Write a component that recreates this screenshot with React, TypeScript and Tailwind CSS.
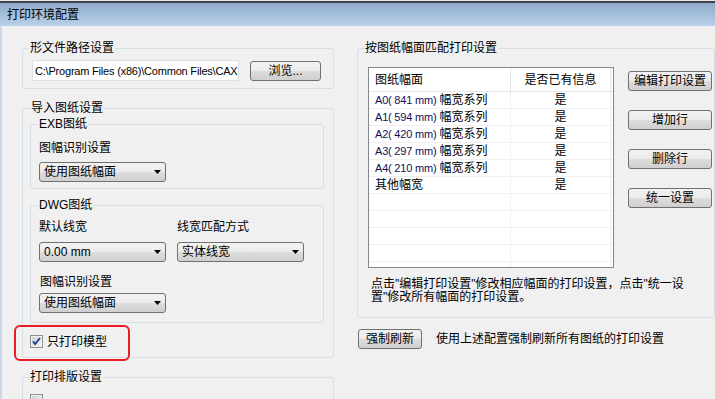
import React from "react";

const btn =
  "flex items-center justify-center h-[20px] border border-[#707070] rounded-[3px] bg-[linear-gradient(#f2f2f2_0%,#ebebeb_50%,#dddddd_50%,#cfcfcf_100%)] text-[12px] leading-[14px]";

function Combo({ label, className = "" }: { label: string; className?: string }) {
  return (
    <div
      className={`flex items-center justify-between h-[20px] w-[127px] pl-[4px] pr-[4px] border border-[#707070] rounded-[3px] bg-[linear-gradient(#f2f2f2_0%,#ebebeb_50%,#dddddd_50%,#cfcfcf_100%)] ${className}`}
    >
      <span className="leading-[14px]">{label}</span>
      <svg width="7" height="4" viewBox="0 0 7 4">
        <polygon points="0,0 7,0 3.5,4" fill="#000" />
      </svg>
    </div>
  );
}

function CheckBox({ checked }: { checked?: boolean }) {
  return (
    <svg width="13" height="13" viewBox="0 0 13 13" className="shrink-0">
      <defs>
        <linearGradient id="cbg" x1="0" y1="0" x2="1" y2="1">
          <stop offset="0" stopColor="#cbcfd5" />
          <stop offset="1" stopColor="#f6f6f6" />
        </linearGradient>
      </defs>
      <rect x="0.5" y="0.5" width="12" height="12" fill="#f4f4f4" stroke="#8e8f8f" />
      <rect x="2" y="2" width="9" height="9" fill="url(#cbg)" stroke="#e0e3e8" strokeWidth="0.5" />
      {checked && (
        <path d="M3 6.3 L5.2 9 L10 3" fill="none" stroke="#21409a" strokeWidth="1.9" />
      )}
    </svg>
  );
}

function Group({
  title,
  legendClass = "ml-[6px]",
  className = "",
  children,
}: {
  title: string;
  legendClass?: string;
  className?: string;
  children: React.ReactNode;
}) {
  return (
    <fieldset className={`border border-[#d5dfe5] rounded-[3px] ${className}`}>
      <legend className={`px-[1px] text-[12px] leading-[14px] ${legendClass}`}>{title}</legend>
      {children}
    </fieldset>
  );
}

const rows = [
  ["A0( 841 mm)", "幅宽系列", "是"],
  ["A1( 594 mm)", "幅宽系列", "是"],
  ["A2( 420 mm)", "幅宽系列", "是"],
  ["A3( 297 mm)", "幅宽系列", "是"],
  ["A4( 210 mm)", "幅宽系列", "是"],
  ["", "其他幅宽", "是"],
  ["", "", ""],
  ["", "", ""],
  ["", "", ""],
  ["", "", ""],
  ["", "", ""],
];

export default function App() {
  return (
    <div className="w-[715px] h-[399px] overflow-hidden bg-[#f0f0f0] text-[12px] text-black font-['Liberation_Sans','Noto_Sans_CJK_SC',sans-serif]">
      {/* title bar */}
      <div className="h-[1px] bg-[#e6e6e6]" />
      <div className="h-[2px] bg-[#414549]" />
      <div className="h-[23px] flex items-center pl-[7px] bg-[linear-gradient(#8fabc9,#b9d1ea)] leading-[14px]">
        打印环境配置
      </div>

      <div className="flex h-[373px] border-l-2 border-[#c9d7e6] pl-[20px]">
        {/* left column */}
        <div className="w-[312px] shrink-0">
          <Group title="形文件路径设置" className="mt-[15px]">
            <div className="flex items-center gap-[11px] pl-[9px] pt-[5px] pb-[7px]">
              <div className="h-[21px] w-[207px] flex items-center pl-[2px] bg-white border border-[#d9dfe5] whitespace-nowrap overflow-hidden leading-[14px] text-[11px] tracking-[-0.2px]">
                C:\Program Files (x86)\Common Files\CAX
              </div>
              <div className={`${btn} w-[71px]`}>浏览...</div>
            </div>
          </Group>

          <Group title="导入图纸设置" legendClass="ml-[7px]" className="mt-[12px]">
            <div className="pl-[7px] pr-[9px] pt-[2px] pb-[9px]">
              <Group title="EXB图纸" legendClass="ml-[7px]">
                <div className="pl-[8px] pt-[10px] pb-[6px]">
                  <div className="leading-[14px]">图幅识别设置</div>
                  <Combo label="使用图纸幅面" className="mt-[7px]" />
                </div>
              </Group>

              <Group title="DWG图纸" legendClass="ml-[7px]" className="mt-[9px]">
                <div className="pl-[8px] pt-[8px] pb-[9px]">
                  <div className="flex leading-[14px]">
                    <div className="w-[138px]">默认线宽</div>
                    <div>线宽匹配方式</div>
                  </div>
                  <div className="flex gap-[11px] mt-[8px]">
                    <Combo label="0.00 mm" />
                    <Combo label="实体线宽" />
                  </div>
                  <div className="mt-[13px] pl-[1px] leading-[14px]">图幅识别设置</div>
                  <Combo label="使用图纸幅面" className="mt-[4px]" />
                </div>
              </Group>

              <div className="relative mt-[12px] flex items-center h-[13px]">
                <CheckBox checked />
                <span className="ml-[4px] leading-[14px]">只打印模型</span>
                <div className="absolute left-[-16px] top-[-10px] w-[116px] h-[36px] border-2 border-[#ec1c24] rounded-[6px]" />
              </div>
            </div>
          </Group>

          <Group title="打印排版设置" legendClass="ml-[6px]" className="mt-[12px] h-[60px]">
            <div className="pl-[7px] pt-[10px]">
              <CheckBox />
            </div>
          </Group>
        </div>

        {/* right column */}
        <div className="ml-[23px] w-[358px] shrink-0">
          <Group title="按图纸幅面匹配打印设置" className="mt-[15px]">
            <div className="flex pl-[10px] pt-[12px]">
              <div className="w-[246px] h-[201px] border border-[#828790] bg-white overflow-hidden">
                <div className="flex h-[24px] border-b border-[#e5e5e5] leading-[14px]">
                  <div className="w-[142px] border-r border-[#e5e5e5] flex items-center pl-[6px]">图纸幅面</div>
                  <div className="w-[100px] border-r border-[#e5e5e5] flex items-center justify-center">是否已有信息</div>
                </div>
                {rows.map((r, i) => (
                  <div key={i} className="flex h-[17px] border-b border-[#f0f0f0] leading-[14px]">
                    <div className="w-[142px] border-r border-[#f0f0f0] flex items-center pl-[6px] whitespace-nowrap">
                      {r[0] && <span className="text-[11px] tracking-[-0.2px] text-[#10105a] mr-[3px]">{r[0]}</span>}
                      {r[1]}
                    </div>
                    <div className="w-[100px] border-r border-[#f0f0f0] flex items-center justify-center">{r[2]}</div>
                  </div>
                ))}
              </div>
              <div className="ml-[14px] pt-[4px] flex flex-col gap-[19px] w-[84px]">
                <div className={btn}>编辑打印设置</div>
                <div className={btn}>增加行</div>
                <div className={btn}>删除行</div>
                <div className={btn}>统一设置</div>
              </div>
            </div>
            <div className="pl-[13px] mt-[10px] pb-[13px] leading-[13px] whitespace-nowrap">
              点击"编辑打印设置"修改相应幅面的打印设置，点击"统一设
              <br />
              置"修改所有幅面的打印设置。
            </div>
          </Group>

          <div className="mt-[11px] flex items-center">
            <div className={`${btn} w-[64px] ml-[1px]`}>强制刷新</div>
            <span className="ml-[14px] leading-[14px]">使用上述配置强制刷新所有图纸的打印设置</span>
          </div>
        </div>
      </div>
    </div>
  );
}
